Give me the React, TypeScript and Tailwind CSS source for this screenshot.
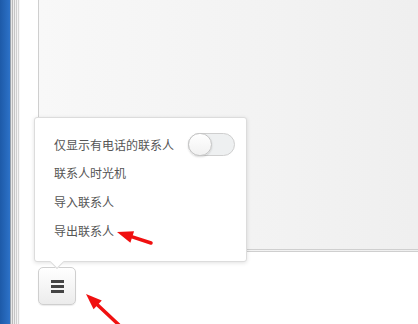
import React from "react";

const items = ["联系人时光机", "导入联系人", "导出联系人"];

function Arrow({ className, x1, y1, x2, y2 }: { className: string; x1: number; y1: number; x2: number; y2: number }) {
  // tip at (x2, y2)
  const a = Math.atan2(y2 - y1, x2 - x1);
  const len = 16;
  const w = 6;
  const bx = x2 - Math.cos(a) * len;
  const by = y2 - Math.sin(a) * len;
  const px = -Math.sin(a) * w;
  const py = Math.cos(a) * w;
  return (
    <svg className={className} width="418" height="324" viewBox="0 0 418 324">
      <line x1={x1} y1={y1} x2={bx} y2={by} stroke="#f01010" strokeWidth="3.5" strokeLinecap="round" />
      <polygon points={`${x2},${y2} ${bx + px},${by + py} ${bx - px},${by - py}`} fill="#f01010" />
    </svg>
  );
}

export default function App() {
  return (
    <div className="relative flex h-[324px] w-[418px] overflow-hidden bg-white text-[12px] text-[#555] font-['Noto_Sans_CJK_SC','Noto_Sans',sans-serif]">
      {/* window edge */}
      <div className="w-[10px] bg-gradient-to-r from-[#1d5aa8] to-[#2d72c8]" />
      <div className="flex w-[10px]">
        <div className="w-px bg-[#9aa3ad]" />
        <div className="w-px bg-[#e6e6e6]" />
        <div className="w-px bg-[#b9b9b9]" />
        <div className="w-px bg-[#eeeeee]" />
        <div className="w-px bg-[#c4c4c4]" />
        <div className="w-px bg-[#f0f0f0]" />
        <div className="w-px bg-[#cfcfcf]" />
        <div className="w-px bg-[#f4f4f4]" />
        <div className="w-px bg-[#d6d6d6]" />
        <div className="w-px bg-[#f7f7f7]" />
      </div>
      <div className="w-[18px] bg-white" />

      <div className="flex flex-1 flex-col">
        <div className="h-[252px] border-b-[3px] border-l border-double border-[#cfcfcf] bg-gradient-to-r from-[#f8f8f8] to-[#efefef]" />
        <div className="flex-1 pt-[15px]">
          <button className="flex h-[38px] w-[38px] flex-col items-center justify-center gap-[2px] rounded-[5px] border border-[#cfcfcf] bg-gradient-to-b from-white to-[#ececec] shadow-[0_1px_1px_rgba(0,0,0,0.08)]">
            <span className="h-[3px] w-[13px] bg-[#444]" />
            <span className="h-[3px] w-[13px] bg-[#444]" />
            <span className="h-[3px] w-[13px] bg-[#444]" />
          </button>
        </div>
      </div>

      {/* popup menu */}
      <div className="absolute left-[34px] top-[117px] h-[145px] w-[213px] rounded-[3px] border border-[#dcdcdc] bg-white shadow-[0_1px_4px_rgba(0,0,0,0.12)]">
        <div className="flex h-[52px] items-center justify-between pl-[19px] pr-[11px] pt-[1px]">
          <span>仅显示有电话的联系人</span>
          <div className="relative h-[23px] w-[47px] rounded-full border border-[#cfcfcf] bg-[#eef0f1]">
            <div className="absolute -left-px -top-px h-[23px] w-[24px] rounded-full border border-[#c4c4c4] bg-gradient-to-b from-white to-[#f1f1f1] shadow-[0_1px_2px_rgba(0,0,0,0.15)]" />
          </div>
        </div>
        <div className="-mt-[12px]">
          {items.map((t) => (
            <div key={t} className="flex h-[29px] items-center pl-[19px] leading-none">
              {t}
            </div>
          ))}
        </div>
        <div className="absolute left-[17px] bottom-[-6px] h-[10px] w-[10px] rotate-45 border-b border-r border-[#dcdcdc] bg-white" />
      </div>

      <Arrow className="pointer-events-none absolute left-0 top-0" x1={151} y1={243} x2={117} y2={232} />
      <Arrow className="pointer-events-none absolute left-0 top-0" x1={119} y1={325} x2={86} y2={294} />
    </div>
  );
}
